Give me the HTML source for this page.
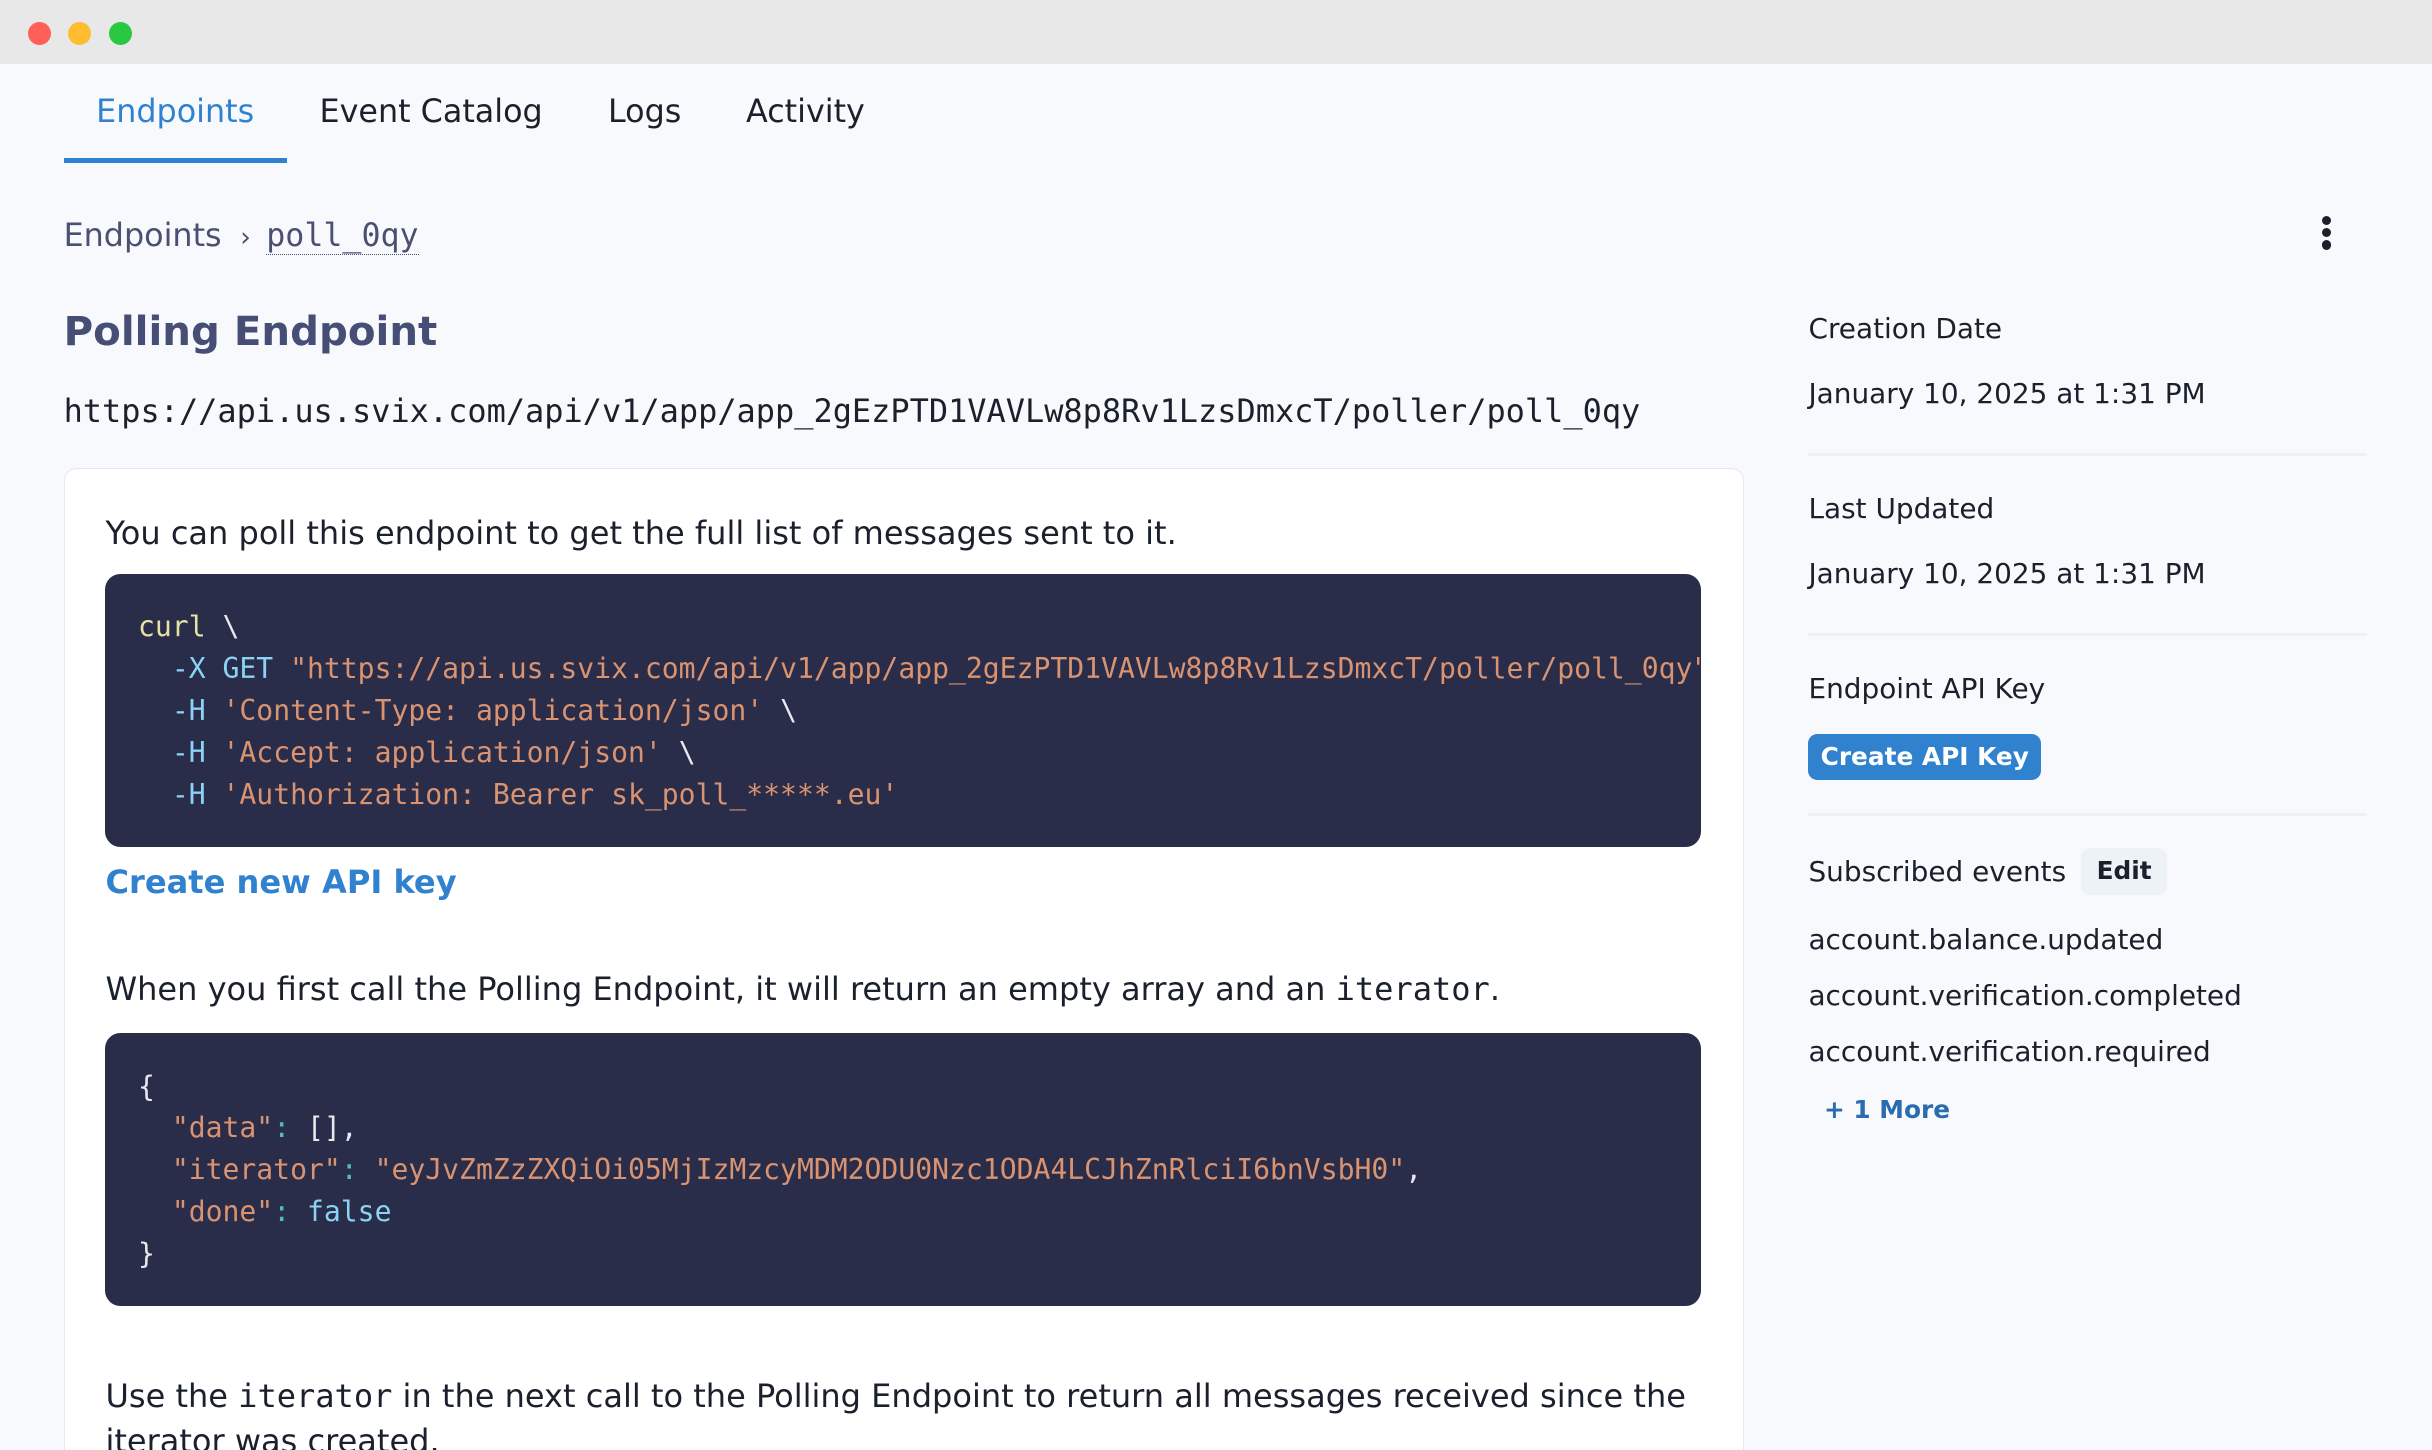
<!DOCTYPE html>
<html><head><meta charset="utf-8"><style>
html,body{margin:0;padding:0;width:2432px;height:1450px;overflow:hidden;background:#f7f9fc}
#w{zoom:1.5510;width:1568px;height:935px;position:relative;overflow:hidden;font-family:"DejaVu Sans","Liberation Sans",sans-serif;color:#1a202c}
.abs{position:absolute;white-space:nowrap}
.mono{font-family:"DejaVu Sans Mono","Liberation Mono",monospace}
#tb{position:absolute;left:0;top:0;width:1568px;height:41px;background:#e8e8e8}
.dot{position:absolute;top:14px;width:15px;height:15px;border-radius:50%}
.tab{position:absolute;top:59px;font-size:20.5px;line-height:26px}
.card{position:absolute;left:41px;top:302px;width:1082px;height:640px;background:#fff;border:1px solid #e2e8f0;border-bottom:none;border-radius:8px 8px 0 0}
.code{position:absolute;left:68px;width:1029px;background:#2a2d4a;border-radius:10px;font-size:18.1px;line-height:27px;color:#e8e8ee;padding:21px 0 0 21px;box-sizing:border-box;overflow:hidden;white-space:pre}
.y{color:#e6e2a6}.b{color:#8ad3f5}.o{color:#d99370}.t{color:#4fc1b0}
.p{position:absolute;left:68px;font-size:20.65px;line-height:26px;color:#1a202c;white-space:nowrap}
.r{position:absolute;left:1166px;font-size:18px;line-height:24px;color:#1a202c;white-space:nowrap}
.hr{position:absolute;left:1166px;width:360px;height:2px;background:#edf0f4}
</style></head><body><div id="w">
<div id="tb"><div class="dot" style="left:18px;background:#fe5f57"></div><div class="dot" style="left:44px;background:#febc2e"></div><div class="dot" style="left:70px;background:#28c840"></div></div>
<div class="tab" style="left:62px;color:#3182ce">Endpoints</div>
<div class="tab" style="left:206px">Event Catalog</div>
<div class="tab" style="left:392px">Logs</div>
<div class="tab" style="left:481px">Activity</div>
<div class="abs" style="left:41px;top:102px;width:144px;height:3px;background:#3182ce"></div>
<div class="abs" style="left:41px;top:139px;font-size:20.5px;line-height:26px;color:#4a5072">Endpoints<span style="font-size:17px;margin:0 10px 0 12px">›</span><span class="mono" style="border-bottom:1px dotted #4a5072;font-size:20.4px">poll_0qy</span></div>
<div class="abs" style="left:1497px;top:139px"><div style="width:6px;height:6px;border-radius:50%;background:#1a202c;margin-bottom:2px"></div><div style="width:6px;height:6px;border-radius:50%;background:#1a202c;margin-bottom:2px"></div><div style="width:6px;height:6px;border-radius:50%;background:#1a202c"></div></div>
<div class="abs" style="left:41px;top:196px;font-size:26px;font-weight:bold;line-height:36px;color:#464e75">Polling Endpoint</div>
<div class="abs mono" style="left:41px;top:252px;font-size:20.6px;line-height:26px;color:#1a202c">https://api.us.svix.com/api/v1/app/app_2gEzPTD1VAVLw8p8Rv1LzsDmxcT/poller/poll_0qy</div>
<div class="card"></div>
<div class="p" style="top:331px">You can poll this endpoint to get the full list of messages sent to it.</div>
<div class="code mono" style="top:370px;height:176px"><span class="y">curl</span> \
  <span class="b">-X GET</span> <span class="o">"https://api.us.svix.com/api/v1/app/app_2gEzPTD1VAVLw8p8Rv1LzsDmxcT/poller/poll_0qy"</span> \
  <span class="b">-H</span> <span class="o">'Content-Type: application/json'</span> \
  <span class="b">-H</span> <span class="o">'Accept: application/json'</span> \
  <span class="b">-H</span> <span class="o">'Authorization: Bearer sk_poll_*****.eu'</span></div>
<div class="p" style="top:556px;font-weight:bold;font-size:20.7px;color:#3182ce">Create new API key</div>
<div class="p" style="top:625px">When you first call the Polling Endpoint, it will return an empty array and an <span class="mono">iterator</span>.</div>
<div class="code mono" style="top:666px;height:176px">{
  <span class="o">"data"</span><span class="t">:</span> [],
  <span class="o">"iterator"</span><span class="t">:</span> <span class="o">"eyJvZmZzZXQiOi05MjIzMzcyMDM2ODU0Nzc1ODA4LCJhZnRlciI6bnVsbH0"</span>,
  <span class="o">"done"</span><span class="t">:</span> <span class="b">false</span>
}</div>
<div class="p" style="top:886px;line-height:29px">Use the <span class="mono">iterator</span> in the next call to the Polling Endpoint to return all messages received since the<br>iterator was created.</div>
<div class="r" style="top:200px">Creation Date</div>
<div class="r" style="top:242px">January 10, 2025 at 1:31 PM</div>
<div class="hr" style="top:292px"></div>
<div class="r" style="top:316px">Last Updated</div>
<div class="r" style="top:358px">January 10, 2025 at 1:31 PM</div>
<div class="hr" style="top:408px"></div>
<div class="r" style="top:432px">Endpoint API Key</div>
<div class="abs" style="left:1166px;top:473px;width:150px;height:30px;border-radius:6px;background:#3182ce;color:#fff;font-weight:bold;font-size:16px;line-height:30px;text-align:center">Create API Key</div>
<div class="hr" style="top:524px"></div>
<div class="r" style="top:550px">Subscribed events</div>
<div class="abs" style="left:1342px;top:547px;width:55px;height:30px;border-radius:6px;background:#edf2f7;font-weight:bold;font-size:16px;line-height:30px;text-align:center;color:#1a202c">Edit</div>
<div class="r" style="top:594px">account.balance.updated</div>
<div class="r" style="top:630px">account.verification.completed</div>
<div class="r" style="top:666px">account.verification.required</div>
<div class="abs" style="left:1176px;top:705px;font-size:16px;font-weight:bold;color:#2b6cb0;line-height:22px">+ 1 More</div>
</div></body></html>
